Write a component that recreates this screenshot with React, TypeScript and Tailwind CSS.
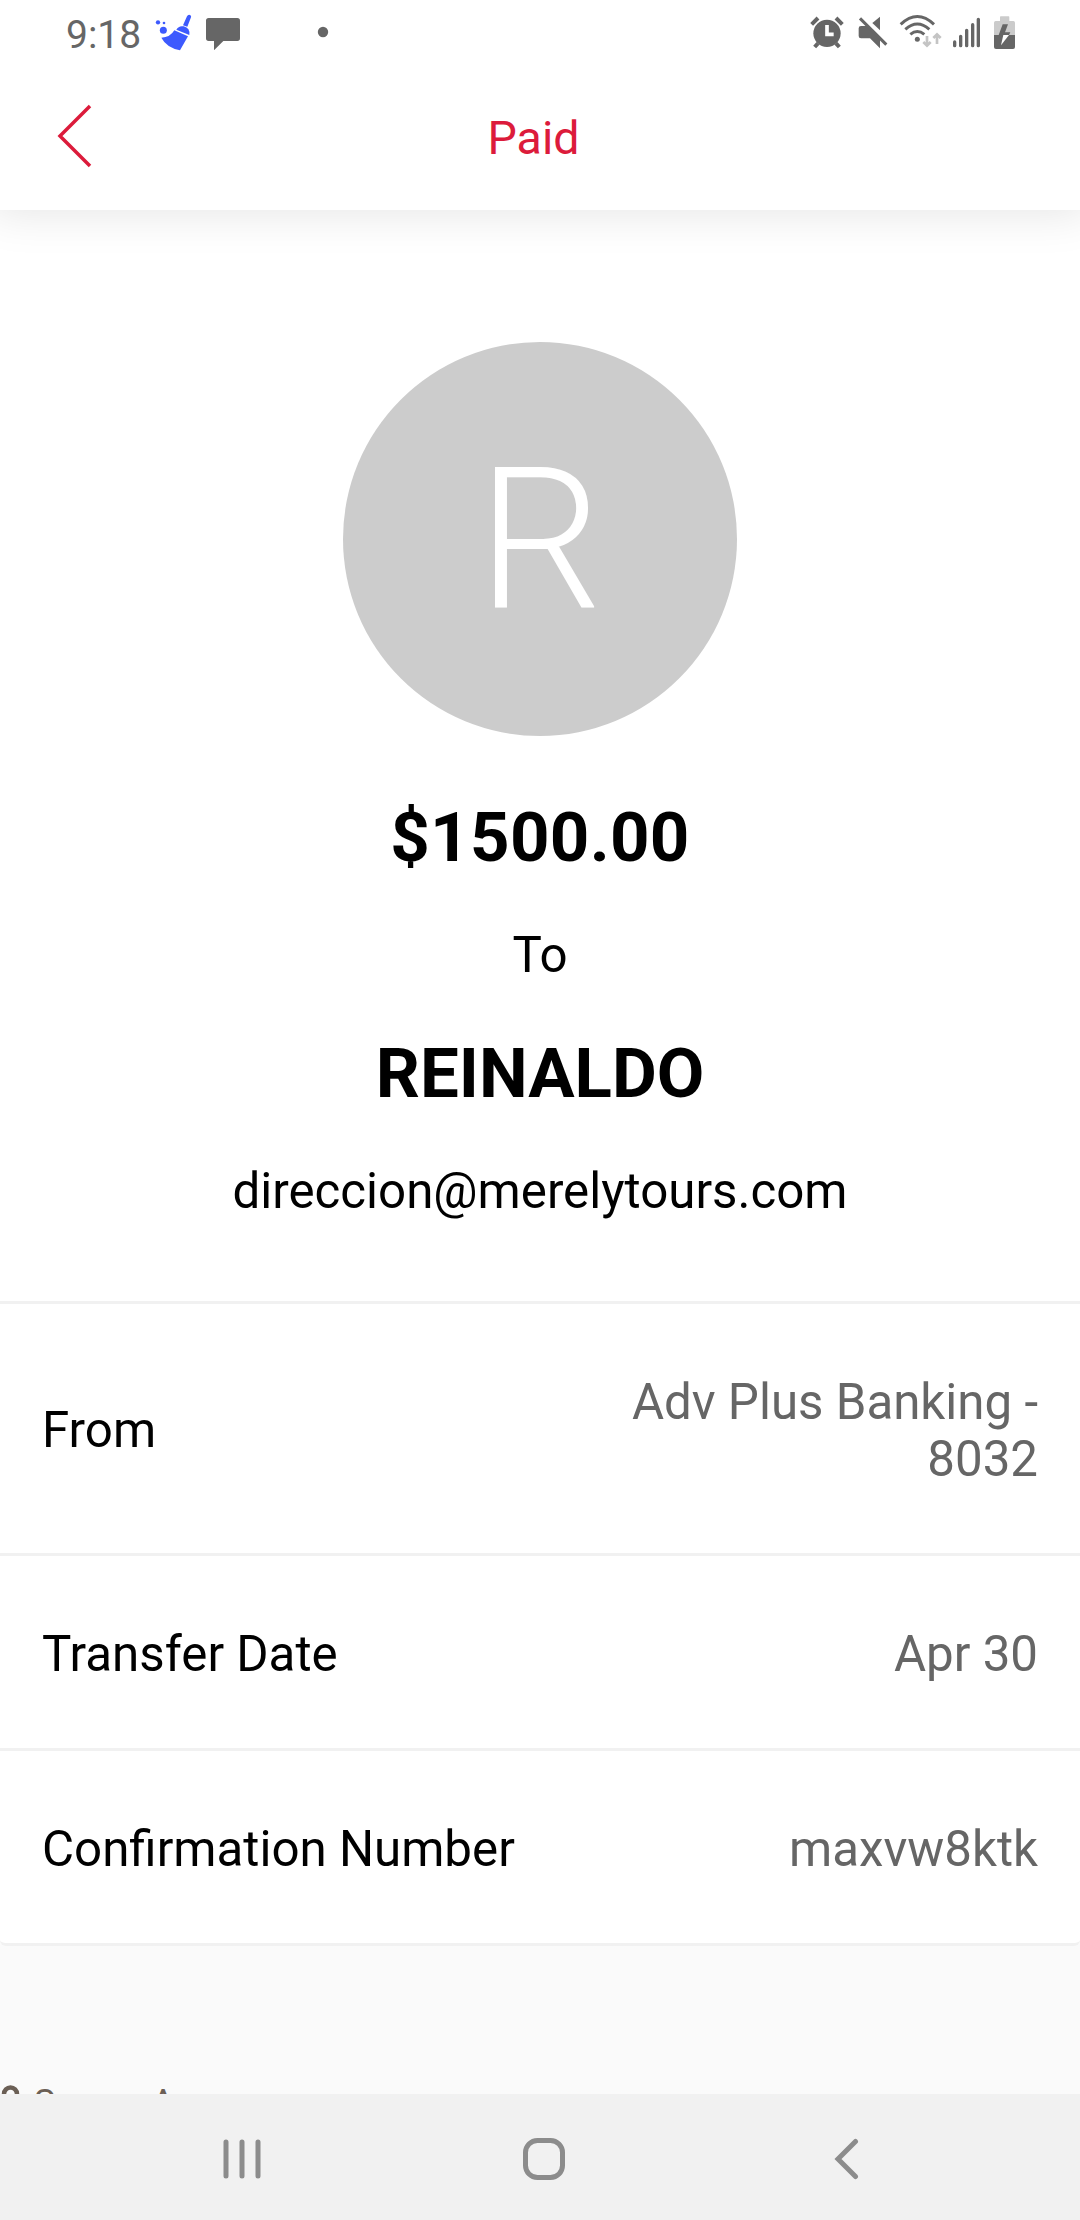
import type { ReactNode } from 'react'

const details = [
  { label: 'From', value: 'Adv Plus Banking - 8032', height: 'h-[252px]' },
  { label: 'Transfer Date', value: 'Apr 30', height: 'h-[195px]' },
  { label: 'Confirmation Number', value: 'maxvw8ktk', height: 'h-[195px]' },
]

export default function App() {
  return (
    <div className="flex h-[2220px] w-[1080px] flex-col overflow-hidden bg-[#fafafa] font-['Roboto',sans-serif] text-black">
      <div className="relative z-10 shrink-0 bg-white shadow-[0_-8px_44px_10px_rgba(0,0,0,0.11)]">
        <StatusBar />
        <Header />
      </div>

      <main className="flex min-h-0 flex-1 flex-col overflow-hidden">
        <div className="shrink-0 rounded-b-md border-b-[3px] border-[#f1f1f1] bg-white">
          <Summary />
          {details.map((item) => (
            <DetailRow key={item.label} label={item.label} height={item.height}>
              {item.value}
            </DetailRow>
          ))}
        </div>
        <SecureArea />
      </main>

      <NavigationBar />
    </div>
  )
}

function StatusBar() {
  return (
    <div className="flex h-[70px] justify-between pr-16 pl-[66px] text-[#666]">
      <div className="flex">
        <span className="w-[89px] text-[39px] leading-[70px]">9:18</span>
        <svg className="h-[70px] w-[37px]" viewBox="315 0 111 210" fill="#3d5afe">
          <circle cx="324" cy="67" r="6.5" />
          <circle cx="342" cy="69" r="4" />
          <circle cx="340" cy="91" r="10.5" />
          <path d="M411 49Q414 43 420 45Q425 47 423 52L412 80L399 76Z" />
          <path d="M379 89Q386 76 401 79Q421 84 418 105Z" />
          <path d="M373 91L414 109L390 151Q349 142 334 113Q360 113 373 91Z" />
        </svg>
        <svg className="ml-[13px] h-[70px] w-9" viewBox="465 0 108 210" fill="currentColor">
          <path d="M476 54H562Q570 54 570 62V115Q570 123 562 123H520L492 151V123H476Q468 123 468 115V62Q468 54 476 54Z" />
        </svg>
        <svg className="ml-[75px] h-[70px] w-3.5" viewBox="798 0 42 210" fill="currentColor">
          <circle cx="819" cy="96" r="15.5" />
        </svg>
      </div>

      <div className="flex">
        {/* alarm */}
        <svg className="h-[70px] w-[34px]" viewBox="60 0 102 210" fill="none" stroke="currentColor">
          <circle cx="111" cy="100" r="41" fill="currentColor" stroke="none" />
          <path d="M65 73L84 54M157 73L138 54" strokeWidth="12" />
          <path d="M84 130L74 141M138 130L148 141" strokeWidth="12" />
          <path d="M111 75V103H131" stroke="#fff" strokeWidth="11" />
        </svg>
        {/* sound off */}
        <svg className="ml-3.5 h-[70px] w-[30px]" viewBox="204 0 90 210" fill="currentColor">
          <path d="M213 78H233L270 115V145L240 115H213Q206 115 206 108V85Q206 78 213 78Z" />
          <path d="M270 50V91L247 69Z" />
          <path d="M210 55L289 134" stroke="currentColor" strokeWidth="9" />
        </svg>
        {/* wifi */}
        <svg className="ml-[11px] h-[70px] w-[43px]" viewBox="327 0 129 210" fill="none">
          <g stroke="currentColor" strokeWidth="9">
            <path d="M332 73Q382 26 432 73" />
            <path d="M346 88Q382 56 418 88" />
            <path d="M361 103Q382 86 403 103" />
          </g>
          <circle cx="382" cy="118" r="7.5" fill="currentColor" />
          <g stroke="#c4c4c4" strokeWidth="8">
            <path d="M411 108V136M400 126L411 137L422 126" />
            <path d="M441 132V104M430 114L441 103L452 114" />
          </g>
        </svg>
        {/* signal */}
        <svg className="ml-2.5 h-[70px] w-[29px]" viewBox="486 0 87 210" stroke="currentColor" strokeWidth="10" strokeLinecap="round">
          <path d="M494 126V137M512 109V137M530 91V137M548 74V137M565 58V137" />
        </svg>
        {/* battery */}
        <svg className="ml-3 h-[70px] w-[23px]" viewBox="609 0 69 210">
          <path d="M632 49H656Q658 49 658 52V63H670Q675 63 675 68V105H612V68Q612 63 617 63H630V52Q630 49 632 49Z" fill="#cbcbcb" />
          <path d="M612 105H675V141Q675 147 669 147H618Q612 147 612 141Z" fill="currentColor" />
          <path d="M638 73H654L645 97H661L657 105H626Z" fill="currentColor" />
          <path d="M640 105H657L633 136Z" fill="#fff" />
        </svg>
      </div>
    </div>
  )
}

function Header() {
  return (
    <header className="flex h-[140px] items-center pb-0.5 pl-[57px] text-[#dc1b3b]">
      <svg className="mb-1.5 h-16 w-9" viewBox="0 0 36 64" fill="none" stroke="currentColor" strokeWidth="3.5">
        <path d="M33 2L3 32L33 62" />
      </svg>
      <h1 className="mr-[106px] flex-1 text-center text-[46.500px]">Paid</h1>
    </header>
  )
}

function Summary() {
  return (
    <section className="flex flex-col items-center pt-[132px] pb-20">
      <div className="flex size-[394px] items-center justify-center rounded-full bg-[#ccc] text-[197px] leading-none font-light text-white">
        R
      </div>
      <p className="mt-[62px] text-[69px] leading-20 font-bold tracking-[0.3px]">$1500.00</p>
      <p className="mt-[47px] text-[49.25px] leading-[60px]">To</p>
      <p className="mt-[49px] text-[69px] leading-20 font-bold">REINALDO</p>
      <p className="mt-[47px] text-[49.25px] leading-[60px]">direccion@merelytours.com</p>
    </section>
  )
}

function DetailRow({
  label,
  height,
  children,
}: {
  label: string
  height: string
  children: ReactNode
}) {
  return (
    <div className={`flex items-center justify-between border-t-[3px] border-[#f1f1f1] px-[42px] pt-1 text-[49.25px] leading-[57px] ${height}`}>
      <span>{label}</span>
      <span className="max-w-[450px] text-right text-[#666]">{children}</span>
    </div>
  )
}

function SecureArea() {
  return (
    <div className="flex pt-[133px] text-[#6b5f55]">
      <svg className="mt-1.5 h-10 w-5 shrink-0" viewBox="0 0 20 40" fill="none" stroke="currentColor" strokeWidth="4.5">
        <path d="M4 18V9a6.500 6.500 0 0 1 13 0V18" />
        <path d="M0 18H20V36H0Z" fill="currentColor" stroke="none" />
      </svg>
      <span className="ml-3.5 text-[35.500px] leading-[46px] whitespace-nowrap">Secure Area</span>
    </div>
  )
}

function NavigationBar() {
  return (
    <nav className="flex h-[126px] shrink-0 items-center bg-[#f1f1f1] pt-1 pl-[222px] text-[#8c8c8c]">
      <svg className="h-[42px] w-10" viewBox="0 0 40 42" stroke="currentColor" strokeWidth="5" strokeLinecap="round">
        <path d="M4 4V38M20 4V38M36 4V38" />
      </svg>
      <svg className="ml-[261px] size-[42px]" viewBox="0 0 42 42" fill="none" stroke="currentColor" strokeWidth="5">
        <rect x="2.500" y="2.500" width="37" height="37" rx="12" />
      </svg>
      <svg className="ml-[269px] h-[42px] w-[26px]" viewBox="0 0 26 42" fill="none" stroke="currentColor" strokeWidth="5" strokeLinecap="round">
        <path d="M21.500 3.500L4 21L21.500 38.500" />
      </svg>
    </nav>
  )
}
